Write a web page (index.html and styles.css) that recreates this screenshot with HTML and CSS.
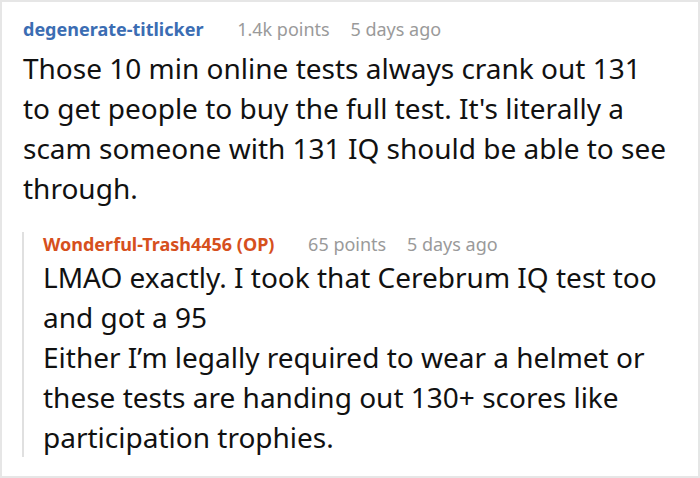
FILE: index.html
```html
<!DOCTYPE html>
<html lang="en">
<head>
<meta charset="utf-8">
<title>Comment thread</title>
<link rel="stylesheet" href="styles.css">
</head>
<body>
<div class="thread">
  <div class="comment">
    <div class="meta">
      <span class="author">degenerate-titlicker</span>
      <span class="points">1.4k points</span>
      <span class="time">5 days ago</span>
    </div>
    <div class="body">Those 10 min online tests always crank out 131 to get people to buy the full test. It's literally a scam someone with 131 IQ should be able to see through.</div>
    <div class="reply">
      <div class="meta">
        <span class="author op">Wonderful-Trash4456 (OP)</span>
        <span class="points">65 points</span>
        <span class="time">5 days ago</span>
      </div>
      <div class="body">LMAO exactly. I took that Cerebrum IQ test too and got a 95<br>Either I’m legally required to wear a helmet or these tests are handing out 130+ scores like participation trophies.</div>
    </div>
  </div>
</div>
</body>
</html>
```

FILE: styles.css
```css
html, body {
  margin: 0;
  padding: 0;
  background: #ffffff;
}

body {
  font-family: "Noto Sans", "Open Sans", sans-serif;
  color: #111111;
}

.thread {
  width: 700px;
  height: 478px;
  box-sizing: border-box;
  border: 2px solid #e6e6e6;
  padding: 15px 30px 0 21px;
}

.meta {
  font-size: 18px;
  line-height: 24px;
  white-space: nowrap;
}

.author {
  font-weight: 700;
  color: #3b6db3;
  margin-right: 29px;
}

.author.op {
  color: #d6501d;
}

.points,
.time {
  color: #9a9a9a;
}

.points {
  margin-right: 16px;
}

.body {
  font-size: 28px;
  line-height: 40px;
  margin-top: 7px;
}

.reply {
  margin-top: 34px;
  border-left: 2px solid #e0e0e0;
  padding-left: 19px;
  margin-left: -1px;
}

.reply .meta {
  margin-top: -10px;
}

.reply .body {
  margin-top: 1px;
}
```
